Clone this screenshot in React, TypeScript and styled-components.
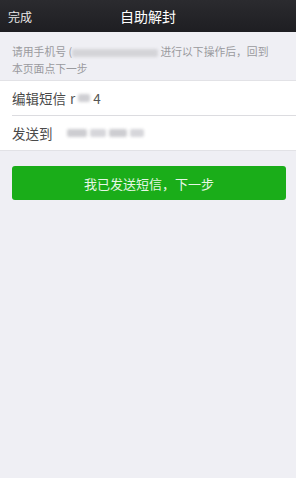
import React from 'react'
import styled, { createGlobalStyle } from 'styled-components'

const GlobalStyle = createGlobalStyle`
  html, body {
    margin: 0;
    padding: 0;
    background: #efeff4;
    font-family: "Noto Sans CJK SC", "Noto Sans", sans-serif;
  }
`;

const Page = styled.div`
  width: 296px;
  min-height: 478px;
  background: #efeff4;
`;

const NavBar = styled.div`
  height: 32px;
  background: linear-gradient(#2b2b2f, #1e1e22);
  display: flex;
  align-items: center;
  position: relative;
  color: #fff;
`;

const NavLeft = styled.div`
  font-size: 12px;
  margin-left: 8px;
  color: #e8e8e8;
`;

const NavTitle = styled.div`
  position: absolute;
  left: 0;
  right: 0;
  text-align: center;
  font-size: 14px;
  pointer-events: none;
`;

const Hint = styled.div`
  padding: 11px 10px 0 12px;
  height: 37px;
  font-size: 10.8px;
  line-height: 17px;
  color: #9a9a9e;
  white-space: nowrap;
`;

const Blur = styled.span<{ $w: number; $tone?: string }>`
  display: inline-block;
  width: ${(p) => p.$w}px;
  height: 8px;
  vertical-align: middle;
  background: ${(p) => p.$tone || '#d4d4d8'};
  filter: blur(1.5px);
  border-radius: 2px;
`;

const List = styled.div`
  background: #fff;
  border-top: 1px solid #e2e2e6;
  border-bottom: 1px solid #e2e2e6;
`;

const Row = styled.div<{ $divider?: boolean }>`
  height: 34px;
  margin-left: 12px;
  display: flex;
  align-items: center;
  font-size: 13.5px;
  color: #4a4a4a;
  border-bottom: ${(p) => (p.$divider ? '1px solid #dcdce0' : 'none')};
`;

const Label = styled.span<{ $gap?: number }>`
  margin-right: ${(p) => p.$gap ?? 4}px;
`;

const Value = styled.span`
  display: inline-flex;
  align-items: center;
  gap: 3px;
  color: #555;
`;

const Button = styled.button`
  display: block;
  margin: 15px 10px 0 12px;
  width: 274px;
  height: 34px;
  border: none;
  border-radius: 3px;
  background: #1aad19;
  color: #e6f7e6;
  font-size: 13px;
  font-family: inherit;
`;

const App = () => {
  return (
    <Page>
      <GlobalStyle />
      <NavBar>
        <NavLeft>完成</NavLeft>
        <NavTitle>自助解封</NavTitle>
      </NavBar>
      <Hint>
        请用手机号 (<Blur $w={86} /> 进行以下操作后，回到
        <br />
        本页面点下一步
      </Hint>
      <List>
        <Row $divider>
          <Label>编辑短信</Label>
          <Value>
            r<Blur $w={12} $tone="#cfcfd3" />4
          </Value>
        </Row>
        <Row>
          <Label $gap={14}>发送到</Label>
          <Value>
            <Blur $w={20} $tone="#cdcdd1" />
            <Blur $w={16} $tone="#d6d6da" />
            <Blur $w={18} $tone="#cdcdd1" />
            <Blur $w={14} $tone="#d6d6da" />
          </Value>
        </Row>
      </List>
      <Button>我已发送短信，下一步</Button>
    </Page>
  )
}

export default App
